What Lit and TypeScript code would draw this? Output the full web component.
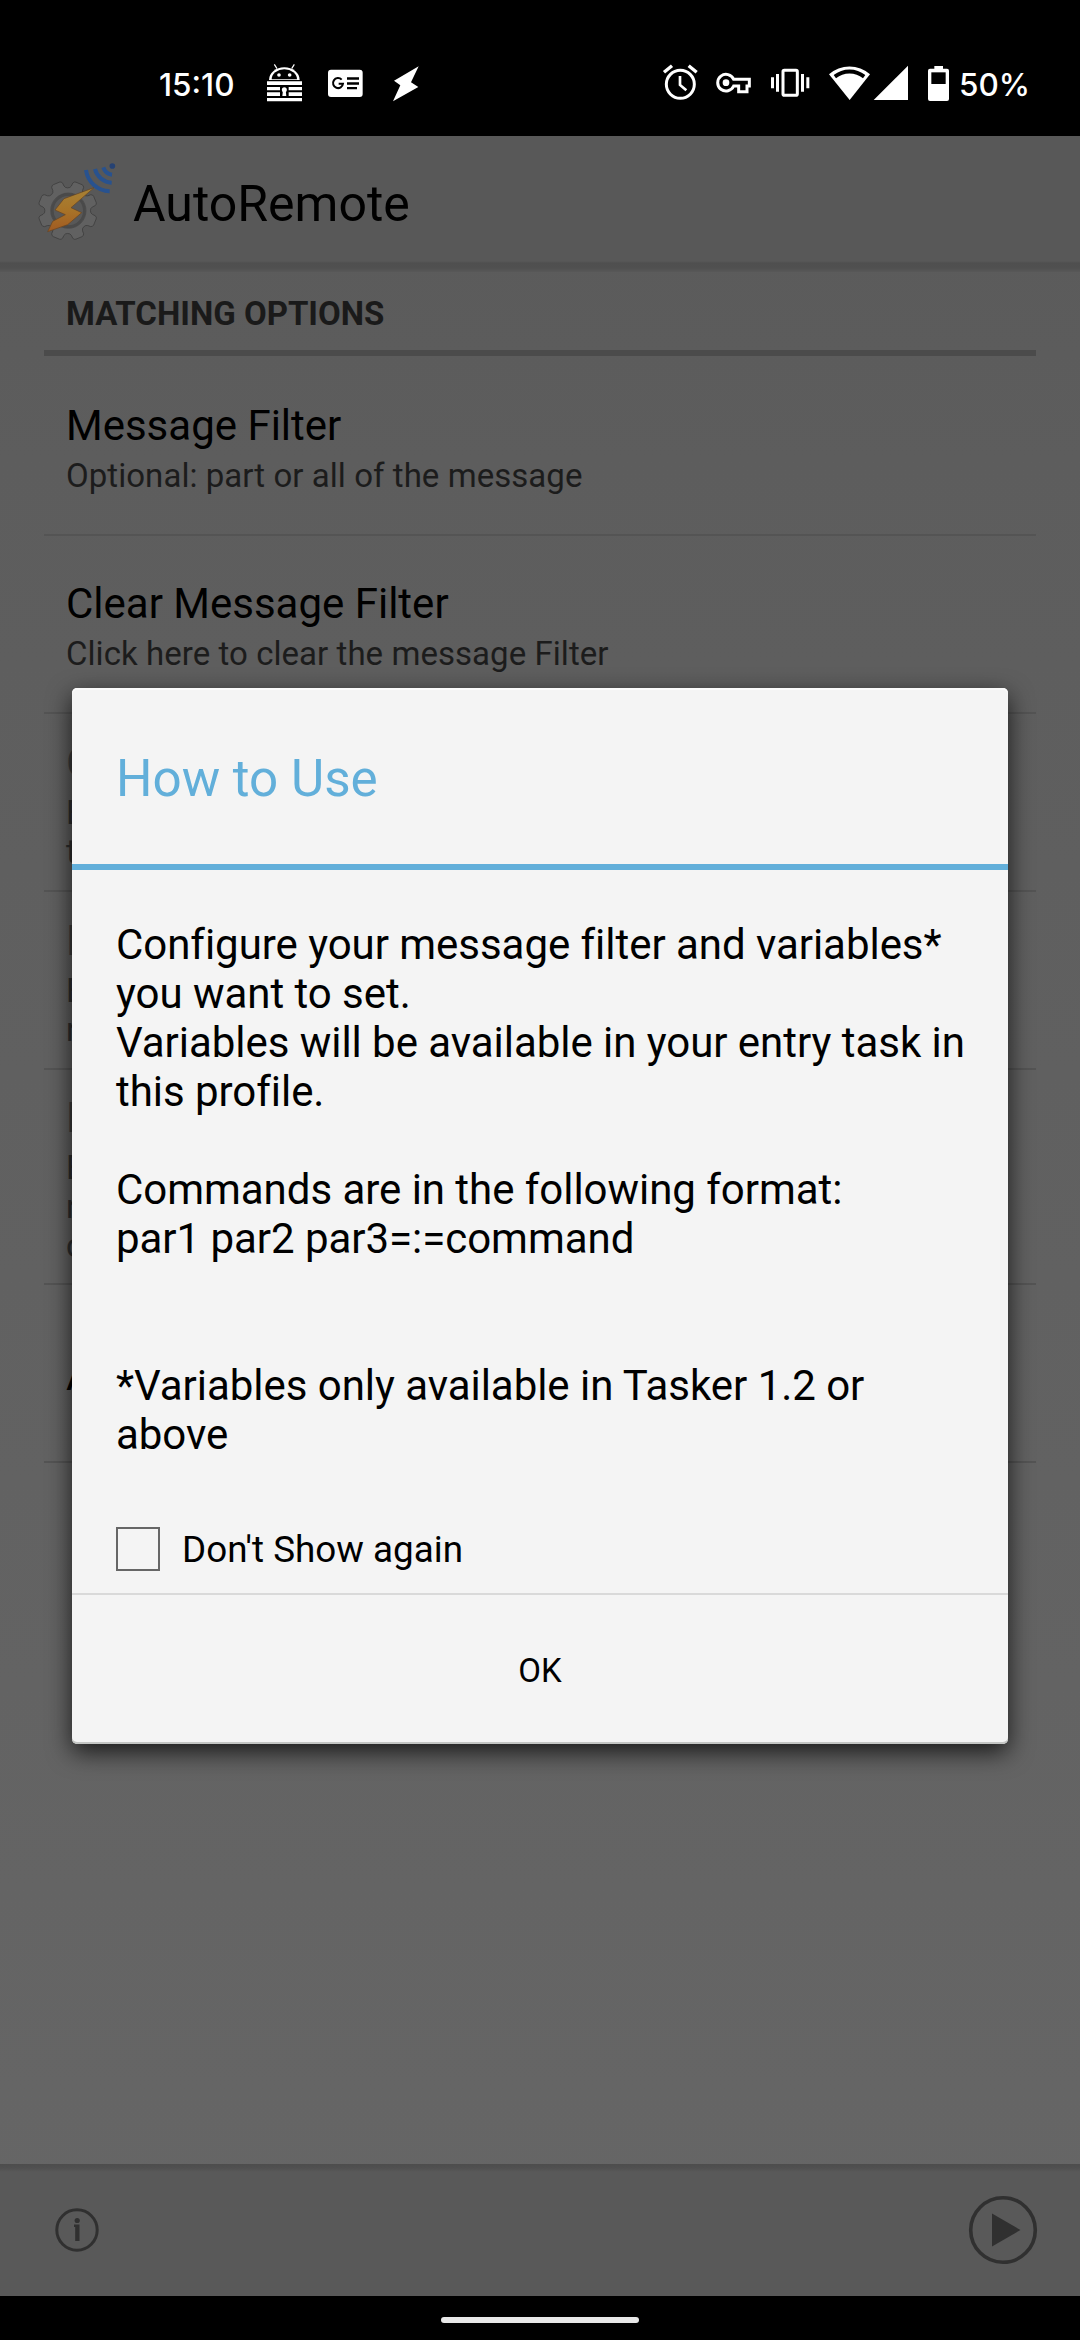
import { LitElement, html, css } from "lit";
import { customElement } from "lit/decorators.js";

interface Pref {
  title: string;
  lines: string[];
  disabled?: boolean;
}

const PREFS: Pref[] = [
  { title: "Message Filter", lines: ["Optional: part or all of the message"] },
  { title: "Clear Message Filter", lines: ["Click here to clear the message Filter"] },
  { title: "C", lines: ["E", "t"], disabled: true },
  { title: "E", lines: ["E", "r"], disabled: true },
  { title: "E", lines: ["E", "r", "c"], disabled: true },
  { title: "A", lines: [] },
];

const MESSAGE = `Configure your message filter and variables*
you want to set.
Variables will be available in your entry task in
this profile.

Commands are in the following format:
par1 par2 par3=:=command


*Variables only available in Tasker 1.2 or
above`;

/** Outline of a cog with rounded teeth; a notch faces straight up. */
function gearPath(cx: number, cy: number, outer: number, inner: number, teeth: number): string {
  const step = (Math.PI * 2) / teeth;
  const pt = (r: number, a: number) =>
    `${(cx + r * Math.sin(a)).toFixed(1)} ${(cy - r * Math.cos(a)).toFixed(1)}`;
  let d = "";
  for (let i = 0; i < teeth; i++) {
    const a = i * step;
    d += i === 0 ? `M${pt(inner, a - step * 0.12)}` : `L${pt(inner, a - step * 0.12)}`;
    d += `Q${pt(inner - 3, a)} ${pt(inner, a + step * 0.12)}`;
    d += `Q${pt(inner + 3, a + step * 0.2)} ${pt(outer - 5, a + step * 0.23)}`;
    d += `Q${pt(outer + 1, a + step * 0.28)} ${pt(outer, a + step * 0.36)}`;
    d += `L${pt(outer, a + step * 0.64)}`;
    d += `Q${pt(outer + 1, a + step * 0.72)} ${pt(outer - 5, a + step * 0.77)}`;
    d += `Q${pt(inner + 3, a + step * 0.8)} ${pt(inner, a + step * 0.88)}`;
  }
  return d + "Z";
}

@customElement("status-bar")
class StatusBar extends LitElement {
  static styles = css`
    :host {
      display: flex;
      box-sizing: border-box;
      height: 136px;
      padding: 63px 51px 0 159px;
      background: #000;
      color: #fff;
      font: 500 31.5px/43px Inter, Roboto, sans-serif;
    }
    svg { display: block; height: 40px; fill: #fff; }
    .group { display: flex; align-items: flex-start; }
    .left { gap: 24px; }
    .right { gap: 18px; margin-left: auto; }
    .radio { display: flex; gap: 2px; }
    .clock { width: 83px; }
    .charge { display: flex; gap: 9px; }
    .percent { width: 70px; }
  `;
  render() {
    return html`
      <div class="group left">
        <span class="clock">15:10</span>
        <svg width="37" viewBox="378 39 111 120">
          <path d="M387 90a46 38 0 0 1 92 0z" />
          <path d="M403 43l8 13M463 43l-8 13" stroke="#fff" stroke-width="3.5" />
          <path d="M395 88a38 30 0 0 1 76 0z" fill="#000" />
          <circle cx="417" cy="75" r="5.5" /><circle cx="449" cy="75" r="5.5" />
          <path d="M381 94h105v11H381zM381 111h105v10H381zM381 127h105v11H381zM381 144h105v10H381z" />
          <path d="M420 108h26v32h-26z" fill="#000" />
          <circle cx="433" cy="119" r="7.5" /><path d="M429 120h8l2 18h-12z" />
        </svg>
        <svg width="37" viewBox="561 39 111 120">
          <rect x="564" y="59" width="104" height="82" rx="9" />
          <path d="M605 89a15 15 0 1 0 4 12h-13" fill="none" stroke="#000" stroke-width="6" />
          <path d="M621 82h36v7h-36zM621 97h36v7h-36zM621 111h30v7h-30z" fill="#000" />
        </svg>
        <svg width="36" viewBox="744 39 108 120">
          <path d="M836 49L762 92l19 14-22 48 76-43-22-14z" />
        </svg>
      </div>
      <div class="group right">
        <svg width="36" viewBox="66 39 108 120">
          <circle cx="121" cy="103" r="42" fill="none" stroke="#fff" stroke-width="9" />
          <path d="M72 67l24-20M170 67l-24-20" stroke="#fff" stroke-width="10" />
          <path d="M120 78v27l19 16" fill="none" stroke="#fff" stroke-width="8" />
        </svg>
        <svg width="36" viewBox="228 39 108 120">
          <path d="M281 88h47v20h-7v17h-25v-17h-15a25 25 0 1 1 0-20z" fill="none" stroke="#fff" stroke-width="9" />
          <circle cx="258" cy="98" r="10" />
        </svg>
        <svg width="40" viewBox="387 39 120 120">
          <rect x="426" y="61" width="43" height="75" rx="4" fill="none" stroke="#fff" stroke-width="9" />
          <path d="M405 72h9v53h-9zM390 82h9v33h-9zM480 72h9v53h-9zM496 82h9v33h-9z" />
        </svg>
        <div class="radio">
          <svg width="43" viewBox="561 39 129 120">
            <path d="M564 73a93 93 0 0 1 123 0L626 150z" />
            <path d="M578 75a76 76 0 0 1 95 0l-7 10a64 64 0 0 0-81 0z" fill="#000" />
          </svg>
          <svg width="36" viewBox="696 39 108 120"><path d="M801 47v103H698z" /></svg>
        </div>
        <div class="charge">
          <svg width="23" viewBox="858 39 69 120">
            <path d="M880 48h26v8h12q6 0 6 6v85q0 6-6 6h-51q-6 0-6-6V62q0-6 6-6h13z" />
            <path d="M871 67h43v35h-43z" fill="#000" />
          </svg>
          <span class="percent">50%</span>
        </div>
      </div>
    `;
  }
}

@customElement("app-icon")
class AppIcon extends LitElement {
  static styles = css`
    :host { display: block; }
    svg { display: block; width: 84px; height: 84px; }
  `;
  render() {
    return html`<svg viewBox="108 126 252 252">
      <defs>
        <linearGradient id="bolt" x1="0" y1="0" x2="0" y2="1">
          <stop offset="0" stop-color="#a78236" /><stop offset="0.5" stop-color="#a87428" /><stop offset="1" stop-color="#a15a22" />
        </linearGradient>
      </defs>
      <path d=${gearPath(203, 272, 89, 70, 8)} fill="#616161" stroke="#393939" stroke-width="2.2" />
      <circle cx="205" cy="272" r="48" fill="#585858" stroke="#4a4a4a" stroke-width="8" />
      <circle cx="205" cy="272" r="53" fill="none" stroke="#3c3c3c" stroke-width="1.5" />
      <path d="M282 203L192 236L165 270L196 284L158 304L143 335L203 314L245 278L213 263Z" fill="url(#bolt)" stroke="#65431f" stroke-width="2" />
      <g fill="none" stroke="#28528f" stroke-width="12">
        <path d="M258 150a74 74 0 0 0 71 64" />
        <path d="M285 147a54 54 0 0 0 50 41" />
        <path d="M310 142a31 31 0 0 0 26 22" />
      </g>
      <circle cx="337" cy="138" r="8.5" fill="#264273" />
    </svg>`;
  }
}

@customElement("usage-dialog")
class UsageDialog extends LitElement {
  static styles = css`
    :host {
      display: flex;
      flex-direction: column;
      width: 936px;
      height: 1056px;
      border-radius: 5px;
      background: #f4f4f4;
      box-shadow: 0 8px 24px rgba(0, 0, 0, 0.75), inset 0 -2px 0 #c4c6c4, inset 0 2px 0 #fbfbfb;
      color: #000;
      font-family: Roboto, sans-serif;
    }
    .title {
      box-sizing: border-box;
      height: 182px;
      padding: 5px 44px 0;
      border-bottom: 6px solid #62afda;
      font-size: 51.2px;
      line-height: 171px;
      color: #62afda;
    }
    .message {
      flex: 1;
      padding: 50px 0 0 44px;
      font-size: 42px;
      line-height: 49px;
      letter-spacing: -0.04px;
      white-space: pre;
    }
    .again {
      display: flex;
      align-items: center;
      gap: 22px;
      height: 88px;
      padding: 0 44px;
      border-bottom: 2px solid #d9d9d9;
      font-size: 36.8px;
      line-height: 44px;
    }
    .label { padding-top: 2px; }
    .box { box-sizing: border-box; width: 44px; height: 44px; border: 2px solid #666; }
    .ok {
      display: flex;
      align-items: center;
      justify-content: center;
      box-sizing: border-box;
      height: 149px;
      padding-top: 2px;
      font-size: 33px;
    }
  `;
  render() {
    return html`
      <div class="title">How to Use</div>
      <div class="message">${MESSAGE}</div>
      <div class="again"><span class="box"></span><span class="label">Don't Show again</span></div>
      <div class="ok">OK</div>
    `;
  }
}

@customElement("app-root")
class AppRoot extends LitElement {
  static styles = css`
    :host {
      display: flex;
      flex-direction: column;
      position: relative;
      height: 2340px;
      overflow: hidden;
      background: #000;
      font-family: Roboto, sans-serif;
      color: #000;
    }
    .screen {
      flex: 1;
      display: flex;
      flex-direction: column;
      background: linear-gradient(#5a5a5a, #5d5d5d 15%, #666 100%);
    }
    .action-bar {
      display: flex;
      align-items: center;
      gap: 13px;
      box-sizing: border-box;
      height: 136px;
      padding-left: 36px;
      background: linear-gradient(#585858 125px, #4f4f4f 127px, #505050 132px, #585858 136px);
      font-size: 50px;
    }
    .list { flex: 1; padding: 0 44px; }
    .header {
      padding: 22px 0 17px 22px;
      border-bottom: 6px solid #4b4b4b;
      margin-bottom: 2px;
      font-size: 33px;
      font-weight: 700;
      line-height: 39px;
      color: #1a1a1a;
    }
    .row {
      display: flex;
      flex-direction: column;
      justify-content: center;
      gap: 6px;
      box-sizing: border-box;
      height: 178px;
      padding: 4px 0 0 22px;
      border-bottom: 2px solid #545454;
    }
    .tall { height: 215px; }
    .name { font-size: 42px; line-height: 49px; }
    .summary { font-size: 33px; line-height: 39px; letter-spacing: 0.05px; color: #1c1c1c; }
    .disabled .name { color: #3c3c3c; }
    .disabled .summary { color: #2e2e2e; }
    .toolbar {
      display: flex;
      align-items: center;
      justify-content: space-between;
      box-sizing: border-box;
      height: 132px;
      padding: 0 42px 0 54px;
      background: linear-gradient(#4d4d4d, #505050 4px, #595959 8px);
    }
    .toolbar svg { display: block; fill: #303030; }
    .nav {
      display: flex;
      align-items: center;
      justify-content: center;
      box-sizing: border-box;
      height: 44px;
      padding-top: 4px;
    }
    .pill { width: 198px; height: 6px; border-radius: 3px; background: #e8e8e8; }
    .overlay {
      position: absolute;
      inset: 136px 0 44px;
      display: flex;
      align-items: center;
      justify-content: center;
    }
  `;
  render() {
    return html`
      <status-bar></status-bar>
      <div class="screen">
        <div class="action-bar"><app-icon></app-icon><span>AutoRemote</span></div>
        <div class="list">
          <div class="header">MATCHING OPTIONS</div>
          ${PREFS.map(
            (p) => html`<div class="row ${p.lines.length > 2 ? "tall" : ""} ${p.disabled ? "disabled" : ""}">
              <div class="name">${p.title}</div>
              ${p.lines.length ? html`<div class="summary">${p.lines.map((l) => html`<div>${l}</div>`)}</div>` : null}
            </div>`,
          )}
        </div>
        <div class="toolbar">
          <svg width="46" height="46" viewBox="0 0 46 46">
            <circle cx="23" cy="23" r="20.2" fill="none" stroke="#303030" stroke-width="3" />
            <circle cx="23.2" cy="13.5" r="2.6" />
            <path d="M20 17.5h5.5V34h-4.3V20H20z" />
          </svg>
          <svg width="70" height="70" viewBox="0 0 70 70">
            <circle cx="35" cy="35" r="32.3" fill="none" stroke="#303030" stroke-width="3.6" />
            <path d="M24 18.5L52.5 35L24 51.5z" />
          </svg>
        </div>
      </div>
      <div class="nav"><div class="pill"></div></div>
      <div class="overlay"><usage-dialog></usage-dialog></div>
    `;
  }
}
